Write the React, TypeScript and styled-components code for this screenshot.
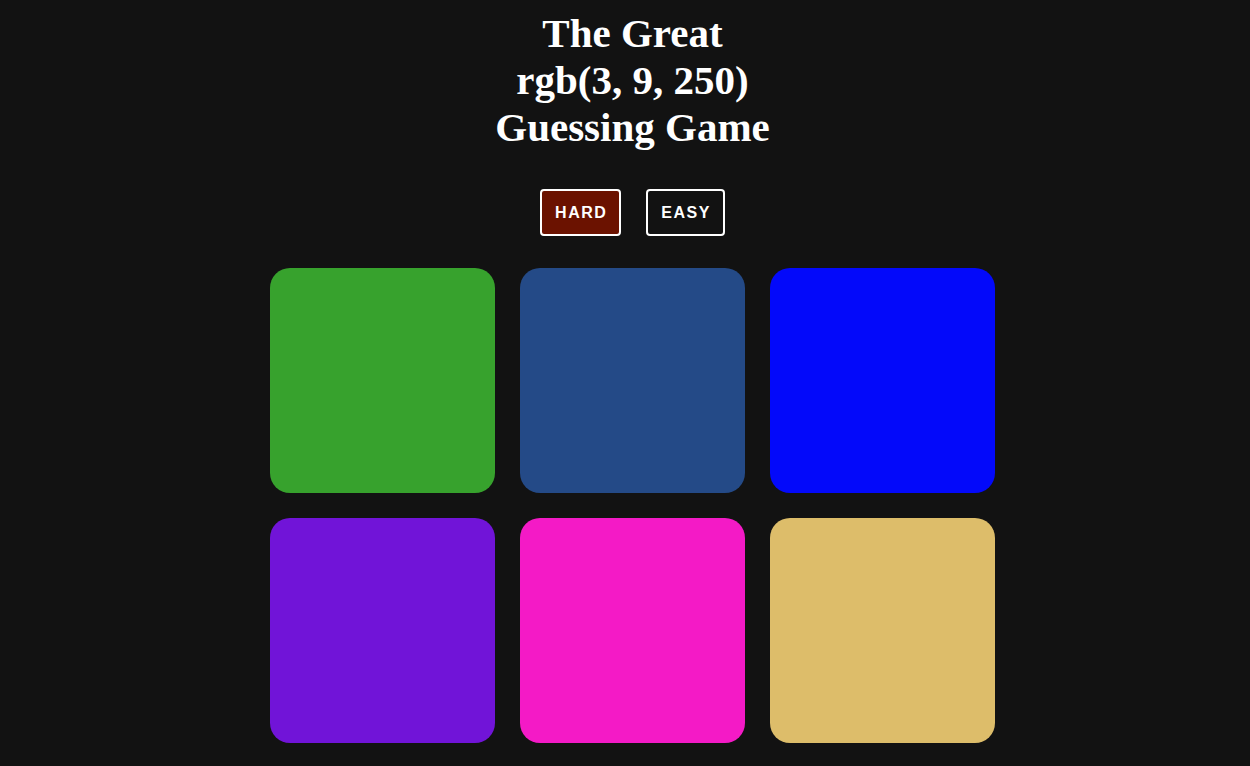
import React from "react";
import styled, { createGlobalStyle } from "styled-components";

const Global = createGlobalStyle`
  html, body { margin: 0; padding: 0; background: #121212; }
  body { font-family: "Liberation Sans", Arial, sans-serif; }
`;

const Page = styled.main`
  display: flex;
  flex-direction: column;
  align-items: center;
  padding-top: 10px;
  padding-left: 15px;
`;

const Title = styled.h1`
  margin: 0;
  color: #ffffff;
  font-family: "Liberation Serif", "Times New Roman", serif;
  font-weight: 700;
  font-size: 41px;
  line-height: 47px;
  text-align: center;
`;

const Modes = styled.div`
  display: flex;
  gap: 25px;
  margin-top: 38px;
`;

const ModeButton = styled.button<{ $active?: boolean }>`
  height: 47px;
  padding: 0 12px 0 13px;
  border: 2px solid #ffffff;
  border-radius: 4px;
  background: ${(p) => (p.$active ? "#6b1200" : "#121212")};
  color: #ffffff;
  font-family: "Liberation Sans", Arial, sans-serif;
  font-weight: 700;
  font-size: 16px;
  letter-spacing: 1.5px;
  cursor: pointer;
`;

const Grid = styled.div`
  display: grid;
  grid-template-columns: repeat(3, 225px);
  gap: 25px;
  margin-top: 32px;
`;

const Swatch = styled.div<{ $color: string }>`
  width: 225px;
  height: 225px;
  border-radius: 20px;
  background: ${(p) => p.$color};
`;

const colors = ["#37a22d", "#244a87", "#0309fa", "#7114d8", "#f41ac6", "#ddbd6a"];

export default function App() {
  return (
    <>
      <Global />
      <Page>
        <Title>
          The Great
          <br />
          rgb(3, 9, 250)
          <br />
          Guessing Game
        </Title>
        <Modes>
          <ModeButton $active>HARD</ModeButton>
          <ModeButton>EASY</ModeButton>
        </Modes>
        <Grid>
          {colors.map((c) => (
            <Swatch key={c} $color={c} />
          ))}
        </Grid>
      </Page>
    </>
  );
}
